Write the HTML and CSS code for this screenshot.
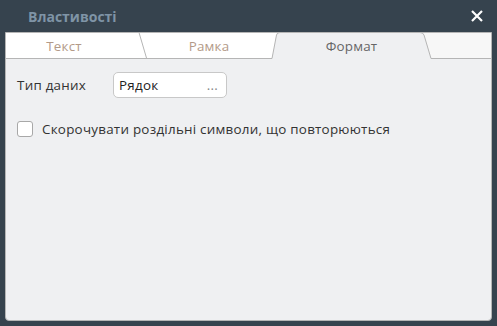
FILE: index.html
```html
<!DOCTYPE html>
<html lang="uk">
<head>
  <meta charset="UTF-8" />
  <meta name="viewport" content="width=device-width, initial-scale=1.0" />
  <title>Властивості</title>
  <link rel="stylesheet" href="styles.css">
</head>
<body>
  <div class="dialog">
    <div class="titlebar">
      <span class="title">Властивості</span>
      <svg class="close" width="12" height="12" viewBox="0 0 12 12">
        <path d="M1 1 L11 11 M11 1 L1 11" stroke="#fff" stroke-width="2.2" fill="none"/>
      </svg>
    </div>

    <div class="panel">
      <div class="tabs">
        <svg class="tab-lines" width="486" height="27" viewBox="0 0 486 27">
          <!-- inactive tabs -->
          <path d="M0.5 27 V0.5 H134 L141.5 26" fill="#fff" stroke="none"/>
          <path d="M134 0.5 H272 L267 26 H141.5 Z" fill="#fff"/>
          <path d="M418 0.5 H486 V26 H426 Z" fill="#f7f7f7"/>
          <!-- active tab -->
          <path d="M267 26.5 L271.5 3 Q272 0.5 275 0.5 H415 Q418 0.5 419 3 L426 26.5 Z" fill="#eff0f2"/>
          <path d="M134 0.5 L141.5 26" stroke="#b5b5b5" fill="none"/>
          <path d="M267 26.5 L271.5 3 Q272 0.5 275 0.5 H415 Q418 0.5 419 3 L426 26.5" stroke="#b5b5b5" fill="none"/>
          <path d="M0 26.5 H267 M426 26.5 H486" stroke="#b5b5b5" fill="none"/>
        </svg>
        <div class="tab tab-first">Текст</div>
        <div class="tab tab-second">Рамка</div>
        <div class="tab tab-active">Формат</div>
      </div>

      <div class="content">
        <div class="row">
          <label class="field-label">Тип даних</label>
          <div class="select">
            <span>Рядок</span>
            <span class="dots">...</span>
          </div>
        </div>

        <div class="check-row">
          <span class="checkbox"></span>
          <span>Скорочувати роздільні символи, що повторюються</span>
        </div>
      </div>
    </div>
  </div>
</body>
</html>
```

FILE: styles.css
```css
body {
  margin: 0;
  background: #36434e;
  font-family: 'Open Sans', sans-serif;
  color: #333;
}

.dialog {
  width: 497px;
  height: 326px;
  box-sizing: border-box;
  padding: 0 5px 5px 5px;
  display: flex;
  flex-direction: column;
}

.titlebar {
  height: 32px;
  display: flex;
  align-items: center;
  justify-content: space-between;
  padding: 0 9px 0 23px;
}

.title {
  font-size: 14px;
  font-weight: 700;
  color: #7f94a6;
}

.close {
  display: block;
}

.panel {
  flex: 1;
  display: flex;
  flex-direction: column;
  border: 1px solid #b5b5b5;
  border-radius: 0 0 4px 4px;
  background: #eff0f2;
  overflow: hidden;
}

.tabs {
  position: relative;
  height: 26px;
  display: flex;
  font-size: 13.4px;
  letter-spacing: 0.2px;
}

.tab-lines {
  position: absolute;
  left: -1px;
  top: -1px;
}

.tab {
  position: relative;
  display: flex;
  align-items: center;
  justify-content: center;
  color: #b39a88;
}

.tab-first {
  width: 138px;
  padding-right: 22px;
  box-sizing: border-box;
}

.tab-second {
  width: 130px;
}

.tab-active {
  width: 155px;
  color: #666;
}

.content {
  padding: 13px 11px;
  font-size: 13.4px;
  letter-spacing: 0.25px;
}

.row {
  display: flex;
  align-items: center;
  gap: 26px;
}

.field-label {
  width: 70px;
}

.select {
  width: 99px;
  height: 24px;
  display: flex;
  align-items: center;
  justify-content: space-between;
  padding: 0 8px 0 5px;
  background: #fff;
  border: 1px solid #c8c8c8;
  border-radius: 5px;
  color: #222;
}

.dots {
  color: #888;
}

.check-row {
  display: flex;
  align-items: center;
  gap: 9px;
  margin-top: 22px;
}

.checkbox {
  width: 14px;
  height: 14px;
  background: #fff;
  border: 1px solid #a8a8a8;
  border-radius: 3px;
}
```
